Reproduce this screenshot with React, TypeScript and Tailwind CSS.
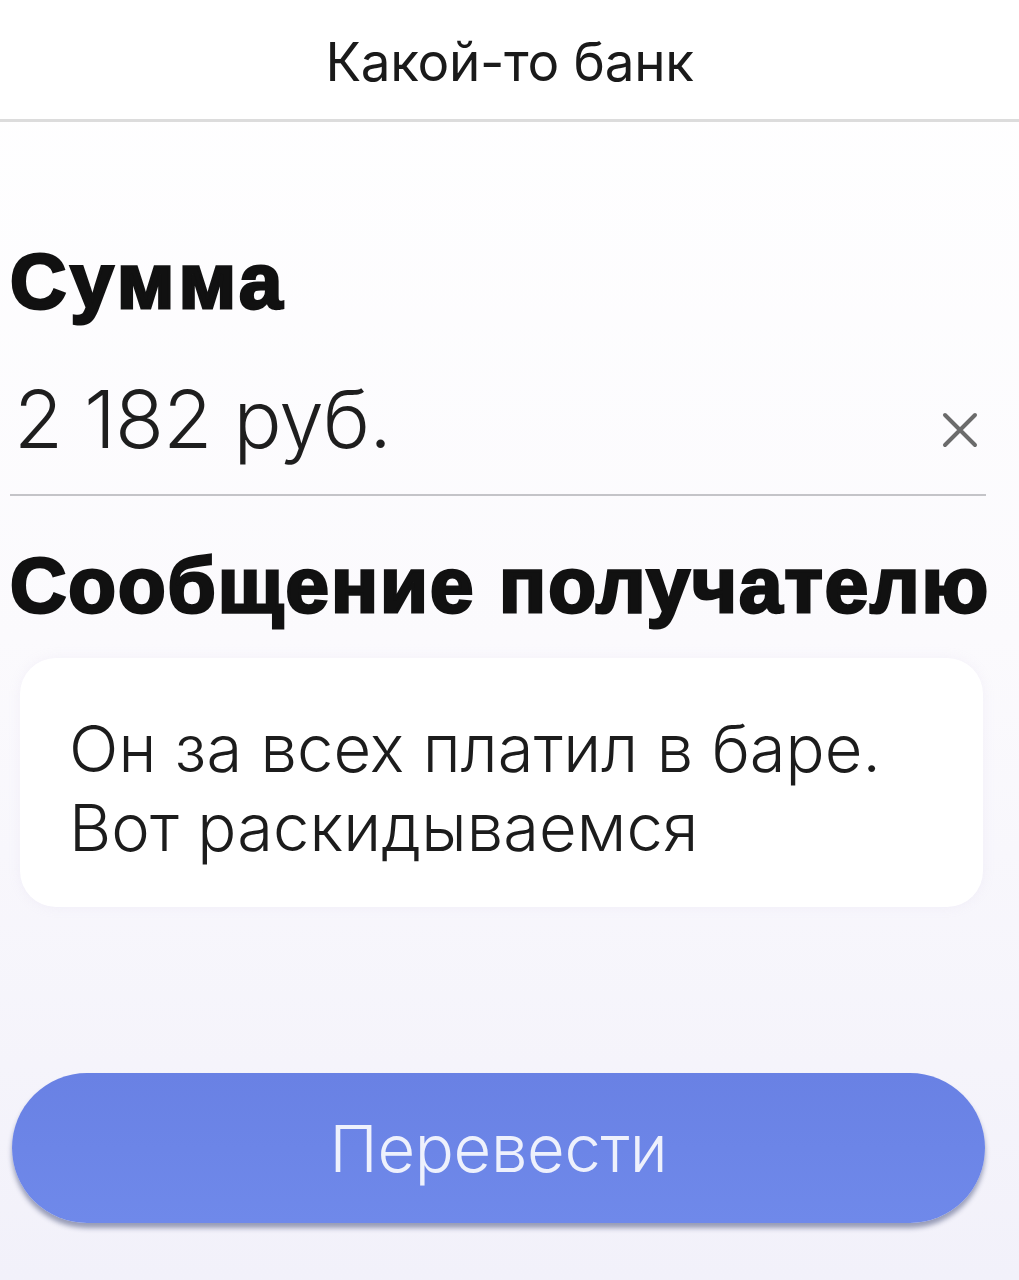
export default function App() {
  return (
    <div className="min-h-[1280px] w-full bg-gradient-to-b from-white via-[#fbfafd] to-[#f2f1fa] font-['Inter',sans-serif] text-[#111]">
      {/* top bar */}
      <header className="flex h-[122px] justify-center border-b-[3px] border-[#dcdcdc] bg-white pt-[36px]">
        <h1 className="text-[53px] font-normal leading-none tracking-[-0.3px] text-[#1a1a1a]">Какой-то банк</h1>
      </header>

      <main className="px-[10px]">
        {/* amount field */}
        <h2 className="mt-[120px] font-['Liberation_Sans',sans-serif] text-[78px] font-bold leading-none tracking-[4px] [-webkit-text-stroke:3px_#111]">
          Сумма
        </h2>
        <div className="mt-[59px] flex w-[976px] items-end justify-between border-b-2 border-[#c4c4c8] pb-[35px] pl-[4px]">
          <span className="text-[80px] font-light leading-none tracking-[-0.7px] text-[#1e1e1e]">2 182 руб.</span>
          <svg
            width="36"
            height="36"
            viewBox="0 0 36 36"
            className="mr-[8px] mb-[11px]"
            stroke="#6b6b6b"
            strokeWidth="4"
            strokeLinecap="round"
          >
            <path d="M3 3 L33 33 M33 3 L3 33" />
          </svg>
        </div>

        {/* message */}
        <h2 className="mt-[50px] font-['Liberation_Sans',sans-serif] text-[78px] font-bold leading-none tracking-[2px] [-webkit-text-stroke:3px_#111]">
          Сообщение получателю
        </h2>
        <div className="mt-[34px] ml-[10px] h-[249px] w-[963px] rounded-[36px] bg-white pl-[49px] pt-[51px] shadow-[0_0_12px_rgba(200,190,220,0.15)]">
          <p className="text-[65px] font-light leading-[79px] tracking-[0.1px] text-[#1c1c1c]">
            Он за всех платил в баре.
            <br />
            Вот раскидываемся
          </p>
        </div>

        {/* submit */}
        <button className="mt-[166px] ml-[2px] flex h-[150px] w-[973px] items-center justify-center rounded-full bg-gradient-to-b from-[#6981e4] to-[#6f89ea] shadow-[0_5px_5px_rgba(40,50,100,0.45)]">
          <span className="text-[65px] font-light leading-none tracking-[-0.3px] text-[#eef1fc]">Перевести</span>
        </button>
      </main>
    </div>
  );
}
